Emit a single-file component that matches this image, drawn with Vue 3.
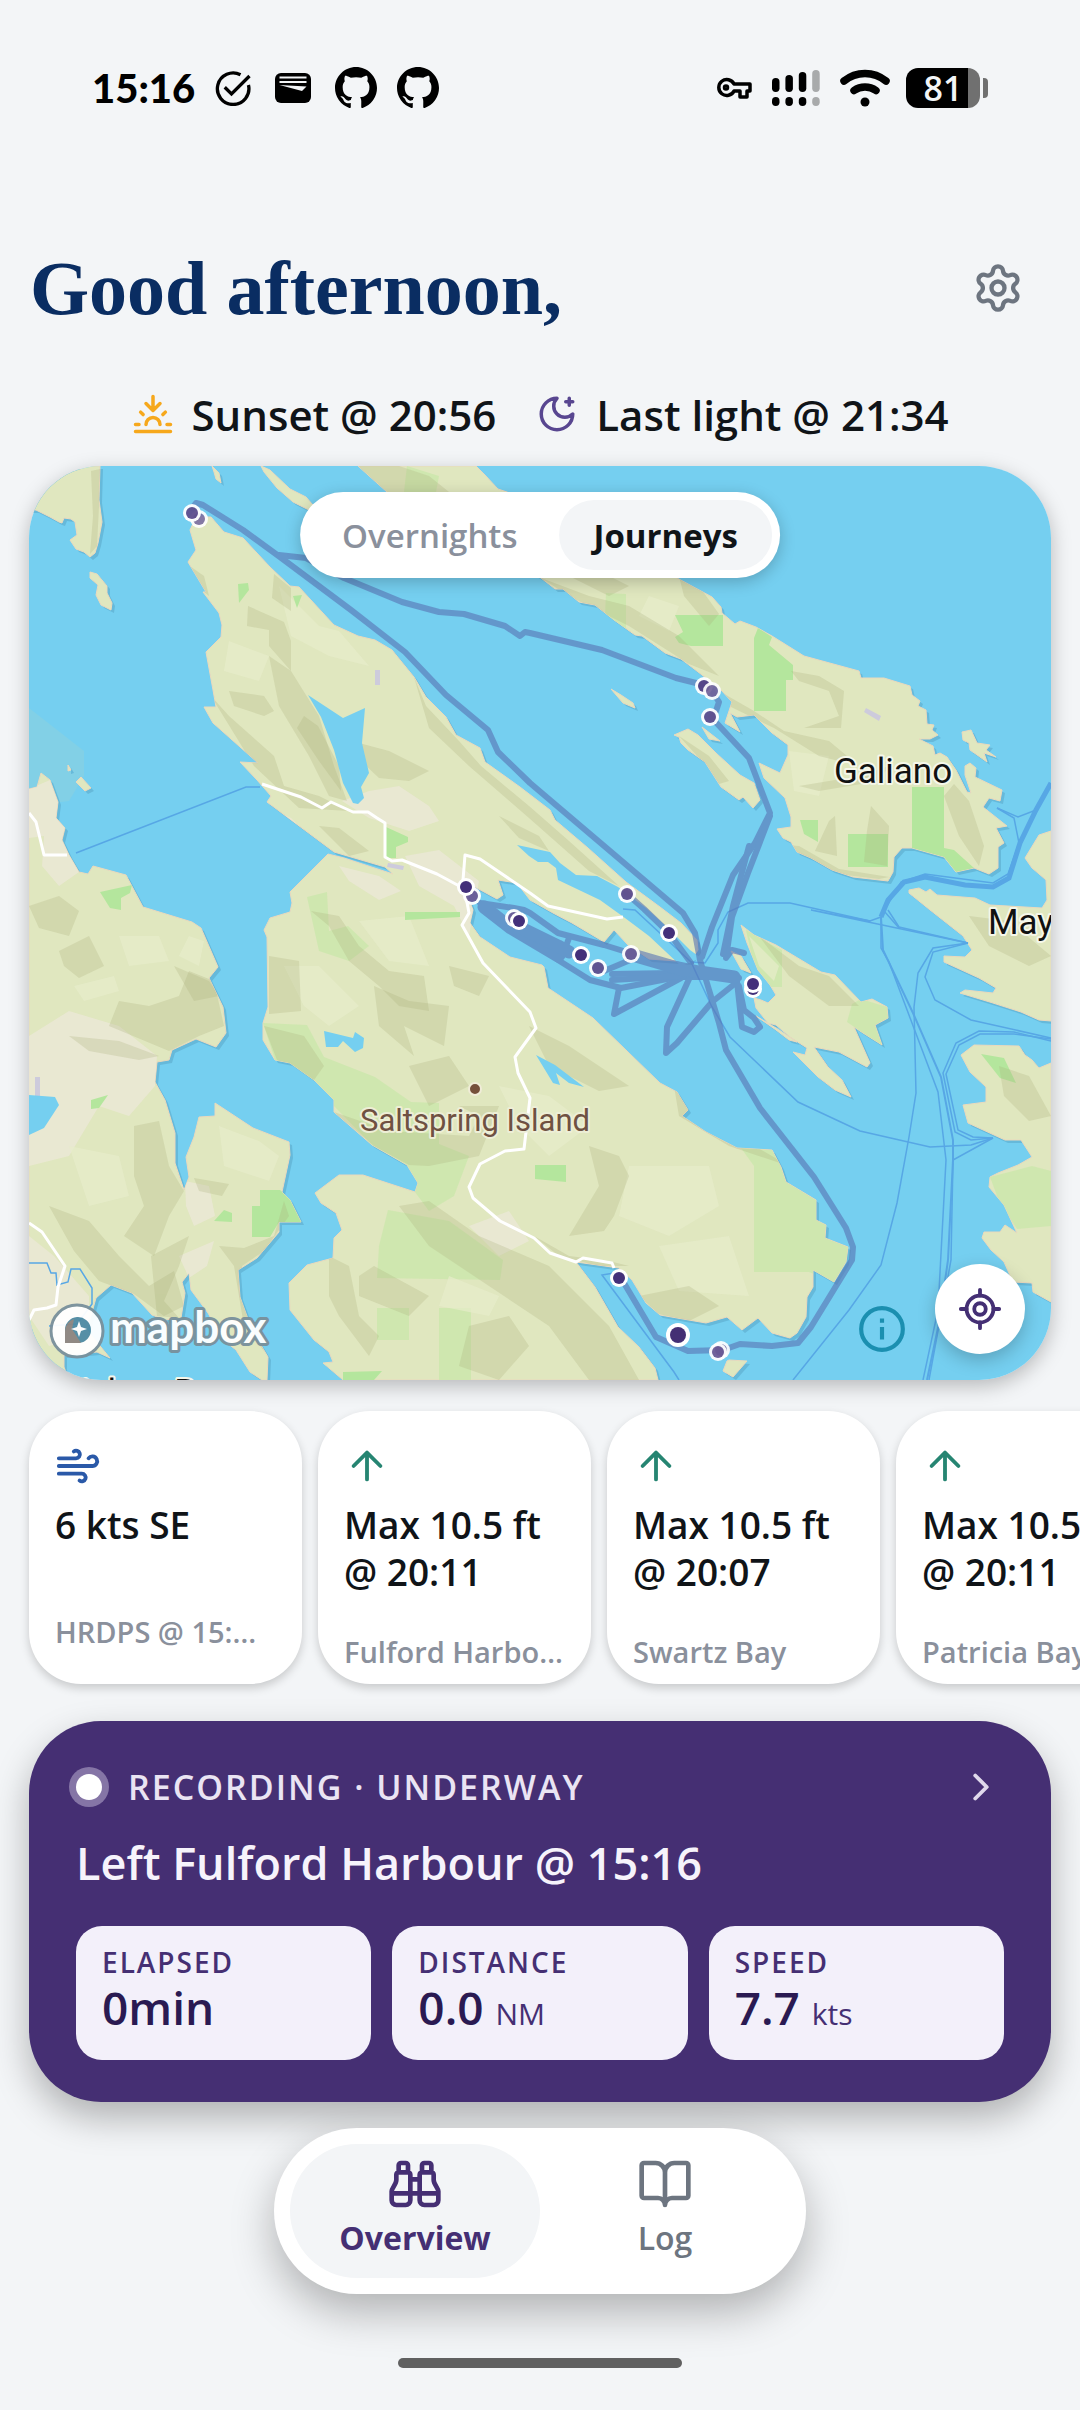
<script setup>
import { ref } from "vue";

const mapMode = ref("Journeys");
const mapModes = ["Overnights", "Journeys"];

const conditions = [
  { kind: "wind", value: "6 kts SE", source: "HRDPS @ 15:00" },
  { kind: "tide", value: "Max 10.5 ft @ 20:11", source: "Fulford Harbour" },
  { kind: "tide", value: "Max 10.5 ft @ 20:07", source: "Swartz Bay" },
  { kind: "tide", value: "Max 10.5 ft @ 20:11", source: "Patricia Bay" },
];

const stats = [
  { label: "Elapsed", value: "0min", unit: "" },
  { label: "Distance", value: "0.0", unit: "NM" },
  { label: "Speed", value: "7.7", unit: "kts" },
];

const signal = [14, 17, 20, 22];

// coastlines
const lands = [
  "0,0 71,0 70,34 73,56 69,77 66,87 61,91 55,86 47,83 41,74 48,69 46,56 42,53 35,52 33,57 30,56 21,51 7,44 0,44",
  "61,106 68,108 78,120 78,127 83,137 82,144 72,139 67,129 69,119 61,112",
  "183,0 190,7 192,17 187,13 185,6",
  "232,0 241,4 261,23 277,31 290,46 280,44 264,36 248,22 235,6",
  "329,0 447,0 456,9 469,23 478,26 648,112 683,131 692,141 693,147 706,158 711,155 727,161 743,170 775,190 830,205 832,212 855,212 881,220 883,229 891,235 889,240 897,244 898,258 905,259 903,264 909,269 901,273 890,273 904,280 906,289 911,287 918,291 927,304 938,326 942,327 936,309 936,300 941,297 947,302 946,311 973,324 971,335 960,332 954,341 978,360 967,362 975,377 969,381 969,402 960,408 945,402 927,406 915,391 883,382 873,382 865,391 864,406 859,415 824,411 803,404 782,392 768,386 762,376 754,372 748,363 762,361 762,351 756,332 735,312 730,297 751,307 759,289 759,279 743,267 725,249 708,251 701,247 711,266 696,257 703,236 692,224 673,209 652,193 636,187 613,170 606,169 585,154 566,139 550,136 534,123 526,123 512,112 358,26",
  "582,223 592,229 604,237 606,242 594,237",
  "645,269 659,263 669,269 687,287 711,309 725,317 731,334 724,342 714,331 710,334 692,321 676,296 659,284 652,277 650,271",
  "673,261 691,275 680,273",
  "933,266 942,264 948,277 961,279 957,284 967,291 955,287 958,296 941,284 940,277 934,274",
  "1022,365 1010,369 996,392 1003,402 1017,414 1018,434 1013,442 961,439 946,432 908,429 901,423 897,426 890,422 880,424 880,427 901,444 934,470 943,484 936,491 915,490 915,496 950,512 967,522 964,527 936,524 931,527 964,537 992,546 1010,554 1022,555",
  "945,579 990,580 996,589 1003,594 1010,602 1022,597 1022,836 1004,826 1003,817 984,816 975,796 962,784 953,772 955,766 971,766 976,759 988,767 975,739 960,721 961,711 969,707 989,699 1003,691 992,674 976,674 939,657 934,639 957,636 957,621 941,606 932,589",
  "712,459 725,469 747,479 792,506 806,509 832,536 843,533 858,541 859,552 846,559 853,579 834,567 825,561 841,597 838,601 810,586 785,581 799,601 813,614 822,631 806,624 789,611 764,586 776,589 778,582 761,571 747,559 739,557 727,542 725,532 732,534 739,537 747,529 741,519 729,504 718,477",
  "727,550 747,562 768,576 760,574 747,564",
  "702,485 712,490 722,507 712,503",
  "182,51 195,66 214,72 241,101 261,120 270,121 305,159 329,170 346,174 363,184 385,211 397,231 417,251 427,269 451,282 456,296 491,321 521,344 526,354 559,382 597,416 631,441 652,457 668,474 669,484 661,496 620,493 599,479 585,464 575,476 543,457 524,447 501,434 488,417 469,414 474,429 468,433 446,421 437,426 444,444 441,457 451,471 481,491 513,499 515,501 519,522 564,552 631,617 648,626 659,644 653,650 677,666 708,682 743,684 752,701 757,716 787,734 787,754 797,759 796,772 819,781 817,796 805,816 784,804 784,821 778,831 777,851 768,867 761,872 743,867 729,852 713,864 698,851 677,857 631,849 617,837 603,814 590,802 547,796 566,821 589,861 610,881 626,902 629,914 314,914 294,897 304,896 300,886 285,874 261,844 260,817 278,799 304,792 305,772 313,764 307,747 292,737 286,727 310,709 334,709 386,726 389,717 378,699 343,679 305,646 305,634 285,614 261,597 246,594 234,574 234,557 239,541 238,471 235,464 241,452 261,446 263,437 261,426 299,388 315,392 364,408 356,401 305,386 238,336 242,330 228,314 211,296 229,297 184,257 175,241 187,241 184,224 177,186 192,171 193,159 190,147 174,126 177,126 159,96 167,84 161,64 167,51",
  "0,323 8,321 12,307 21,314 29,336 27,352 36,362 33,374 40,389 50,406 59,408 64,400 97,409 114,441 163,456 172,462 189,501 180,512 194,541 197,567 187,581 167,573 143,584 140,594 128,596 126,616 136,634 146,667 146,697 155,724 160,711 157,691 165,671 170,651 186,650 186,637 224,662 260,676 261,689 253,726 261,734 272,756 250,756 250,766 228,792 209,804 211,831 223,864 239,891 238,914 233,914 221,906 207,884 194,874 179,847 162,824 160,807 153,816 156,827 152,852 136,854 123,849 103,827 82,819 67,832 58,864 81,892 68,886 35,889 35,901 40,914 0,914",
  "39,299 42,304 39,305",
  "47,316 52,311 62,322 56,325",
  "698,895 694,905 704,911 718,895 700,894",
];

const lakes = [
  "279,229 314,252 336,242 333,277 340,307 332,321 335,332 329,338 324,337 314,317 305,284 292,251",
  "488,379 521,386 531,397 547,409 568,410 589,421 617,442 641,464 661,484 672,492 652,500 620,470 596,452 571,434 550,424 529,414 527,402 519,396 509,396 500,390",
  "0,629 26,631 30,639 15,662 0,669",
  "295,565 324,572 326,566 335,572 334,582 326,586 314,575 309,581 297,581",
  "507,589 526,599 555,621 540,617 527,607 531,619 524,617",
];

const parks = [
  "357,361 379,371 379,376 367,381 367,392 357,392",
  "376,446 431,446 431,451 376,454",
  "71,426 103,419 101,427 92,432 92,444 81,442",
  "646,149 694,149 694,180 662,180 650,177 646,171 654,166",
  "729,162 743,171 740,179 764,199 764,214 757,214 757,245 725,245 725,172",
  "883,321 915,321 915,382 925,384 945,402 927,406 915,391 883,382",
  "819,368 859,368 859,401 819,401",
  "771,354 789,354 789,376 775,368",
  "506,699 537,699 537,716 506,713",
  "231,724 251,724 270,741 272,757 250,756 241,771 223,771 223,740 231,740",
  "185,755 195,744 203,747 203,756",
  "314,906 353,905 345,914 314,914",
  "952,588 975,592 987,617 971,612",
  "62,634 79,629 70,642 62,643",
  "209,118 219,117 220,124 210,137",
  "264,130 273,129 268,142",
];

const woods = [
  "712,682 743,684 752,701 757,716 787,734 787,754 797,759 796,772 819,781 817,796 805,816 780,806 725,806 725,700",
  "717,464 745,480 753,484 753,521 738,521 725,500",
  "348,842 380,842 380,874 348,874",
  "410,842 442,842 442,914 410,914",
  "359,744 420,755 474,794 471,814 348,812 350,780",
  "234,557 278,559 295,591 346,611 382,636 410,637 410,678 440,690 425,730 400,745 386,726 378,699 343,679 305,640 285,614 246,594",
  "832,533 858,541 859,552 846,559 853,579 834,567 818,556 823,538",
  "961,711 1003,700 1022,705 1022,760 988,763 970,735",
  "278,431 298,426 300,465 319,460 340,480 320,495 290,485",
  "577,127 597,128 597,164 576,150",
  "378,0 410,10 407,26 375,26",
];

// low ground and towns
const lowlands = [
  "0,323 21,314 29,336 36,362 33,374 50,406 30,420 13,400 15,370 0,372",
  "0,570 40,545 90,560 128,590 126,620 100,650 70,640 40,690 0,700",
  "313,335 340,325 370,320 400,340 410,355 380,365 340,352",
  "376,390 410,384 450,415 440,470 425,440 390,420",
  "310,400 350,410 372,425 350,434 320,415",
  "156,715 180,720 186,750 165,760 157,740",
  "440,760 480,745 500,775 470,790",
  "150,790 185,775 178,800 160,812",
  "0,770 25,790 60,830 60,870 20,880 0,850",
  "236,340 262,352 290,380 276,382 238,350",
];

const shades = [
  "219,140 255,156 262,175 262,205 240,180 240,164 218,160",
  "240,190 262,205 290,250 305,300 318,335 300,330 280,290 250,240",
  "182,230 200,250 245,290 255,320 290,330 320,345 270,342 225,300",
  "275,250 289,260 310,300 312,325 290,295 268,262",
  "330,277 360,285 400,305 380,315 350,312 332,295",
  "155,96 175,110 180,130 168,120",
  "245,108 262,122 262,145 243,132",
  "385,211 397,240 430,275 452,300 500,340 540,375 590,420 560,405 500,352 440,300 400,262",
  "200,225 235,230 245,245 235,250 205,240",
  "290,360 310,362 340,385 320,390",
  "470,350 510,370 520,385 490,372",
  "329,0 358,26 420,26 400,10 370,0",
  "420,26 500,60 560,100 600,120 580,130 540,110 480,60",
  "512,112 560,130 600,140 650,170 690,210 660,198 600,160 540,130",
  "655,195 690,225 725,245 755,265 800,275 830,300 790,290 745,262 700,240",
  "762,205 790,210 815,225 812,262 775,262 810,250 800,225 770,215",
  "770,320 830,310 860,300 850,315 790,325",
  "800,355 806,350 808,390 786,385",
  "842,340 860,360 858,400 835,396 838,365",
  "925,318 940,335 955,380 950,400 930,370 915,330",
  "650,110 670,120 690,148 680,160 655,130",
  "740,378 770,380 810,403 860,411 850,413 800,407 770,392",
  "30,485 60,470 75,500 50,512 35,500",
  "90,535 120,540 150,530 160,505 185,515 195,560 170,570 140,585 80,560",
  "40,570 90,575 130,590 110,594 60,585",
  "145,500 180,515 190,530 165,535",
  "20,740 60,755 90,790 120,820 145,805 155,840 135,850 105,828 70,815 45,785",
  "105,660 130,655 140,700 155,725 140,750 125,790 95,770 115,740 105,710",
  "122,790 160,770 150,800 135,835 150,852 128,850",
  "165,712 200,718 193,730 170,725",
  "213,800 235,785 260,750 255,735 245,770 215,782 190,780 205,800 215,860 235,885 225,850 212,830",
  "282,445 300,460 320,495 350,520 370,540 400,545 395,510 360,505 330,480 310,450",
  "240,490 270,495 272,545 240,548",
  "345,520 380,535 420,540 415,580 375,560 385,590 350,560",
  "235,560 275,570 295,600 285,614 248,594",
  "305,646 360,665 440,670 450,650 430,640 470,640 450,690 400,700 380,699 345,680",
  "420,500 460,510 450,530 425,520",
  "380,600 420,590 440,620 400,640",
  "330,810 345,800 400,830 380,850 330,830",
  "370,740 400,735 450,770 520,800 580,860 610,914 560,914 520,860 460,820 400,780",
  "440,860 480,850 500,880 470,914 430,900",
  "300,790 320,800 330,850 350,870 340,890 310,850 300,830",
  "500,560 540,580 600,620 570,625 520,600",
  "560,680 590,690 600,710 585,750 575,765 540,770 570,720",
  "505,770 540,790 580,795 600,800 570,800 530,790",
  "610,830 660,820 690,840 660,855 630,848",
  "645,620 700,665 760,700 700,680 650,650",
  "730,470 770,500 800,510 830,540 800,540 760,510",
  "650,270 680,290 700,315 690,318 670,292",
  "940,450 980,455 1022,490 1000,500 960,480",
  "970,600 1000,610 1022,650 1000,655 975,630",
  "0,440 30,430 50,445 40,470 10,462",
  "62,5 71,3 70,40 68,80 61,88 64,50",
];

const hills = [
  "250,120 290,160 310,165 340,200 300,190 262,170",
  "200,175 240,190 230,215 195,205",
  "620,130 650,140 640,165 610,150",
  "760,285 800,290 790,330 765,325",
  "330,455 380,450 400,500 360,495",
  "255,500 290,500 330,540 300,560 275,540",
  "160,470 175,475 170,500 150,490",
  "90,470 130,470 140,495 100,500",
  "45,520 85,510 90,525 55,535",
  "190,660 230,675 250,690 240,715 195,700",
  "40,680 90,690 100,730 60,740",
  "470,620 520,630 560,660 520,690 490,660",
  "600,700 680,700 690,740 640,770 590,750",
  "630,780 700,770 720,830 650,825",
  "420,810 470,830 460,850 410,840",
  "720,470 750,500 745,515 730,500",
];

const roads = [
  "233,318 272,331 293,342 302,336 324,346 339,346 348,352 356,357 356,391 363,395 373,394 408,408 434,422",
  "434,414 436,389 451,393 501,427 519,440 578,453 594,451",
  "437,431 440,447 433,459 454,497 501,546 507,562 486,591 489,607 501,632 495,683 476,685 451,698 440,721 444,732 471,755 505,772 521,787 547,796 554,792 583,797 585,802",
  "0,347 7,356 15,389 38,389",
  "0,757 13,766 36,800 29,821 27,839 18,842 5,844 0,854",
];

const ferries = [
  "47,387 217,321 231,321",
  "852,451 852,482 860,496 909,626 917,694 909,844 894,914",
  "939,477 904,482 889,507 885,541 887,627 880,671 868,737 852,799 820,844 764,914",
  "939,477 904,486 896,511 906,534 942,554 1022,572",
  "1022,575 985,566 950,565 927,577 914,607 926,666 942,674 964,672",
  "1022,573 985,568 951,568 930,579 917,608 929,664 944,671 964,672",
  "964,672 942,679 901,681 831,665 769,636 701,571 683,541 662,496 606,444 594,443",
  "968,342 989,351 1007,344",
  "939,477 870,461 859,444",
  "939,477 782,444 841,455 852,451",
  "841,455 761,437 719,437 699,446 689,464 689,477 676,497 662,496",
  "964,672 924,694 922,794 900,914",
  "585,807 573,809 645,906 650,914",
  "968,342 985,352 990,377 979,408 964,417 896,408 872,416 855,445 870,462",
  "0,797 18,797 22,807 27,807 28,819 39,816 42,803 51,803 63,822 63,838 48,858 20,860",
];

const journeys = [
  "163,42 167,37 174,39 214,64 251,91 322,144 376,186 417,229 459,264 469,286 501,317 654,447 666,467 671,494 690,557 697,584 731,642 785,711 817,762 824,781 823,794 782,861 769,877 743,880 711,878 694,884 659,885 627,871 592,812",
  "250,89 277,92 315,112 373,136 410,146 435,148 476,160 491,170 496,166 501,167 573,184 647,212 675,219 683,225 690,236 687,245 682,251 720,292 741,347 726,377 704,409 683,461 673,491",
  "741,350 719,407 703,451 697,492 703,484 715,487",
  "720,380 704,440 694,488",
  "451,437 485,442 495,444 501,447 529,467 575,479 617,492 659,504 708,511",
  "529,494 561,514 592,522 648,511 708,511",
  "540,472 533,491",
  "575,505 606,492",
  "590,522 585,548 652,512",
  "661,511 638,561 637,587 648,577 683,536 708,516",
  "708,516 713,561 725,566 731,561 725,552 715,544 710,520",
  "597,427 615,443 640,467 662,497",
  "583,508 645,507 710,512",
  "583,514 650,510",
];

const busyLegs = [
  "455,441 482,462 529,490",
  "488,460 529,480 540,486",
  "640,500 670,506 705,511",
  "600,488 655,504",
];

const stops = [
  [170, 53, 0.7], [163, 47, 0.85], [675, 220, 0.9], [683, 225, 0.75], [681, 251, 0.85],
  [598, 428, 0.85], [640, 467, 1], [602, 488, 0.8], [552, 489, 1], [569, 502, 0.85],
  [724, 523, 1], [724, 518, 1], [443, 430, 0.8], [437, 421, 1],
  [485, 452, 0.8], [490, 455, 1], [590, 812, 1], [692, 884, 0.7], [689, 886, 0.8],
];
</script>

<template>
  <div class="screen">
    <div class="status">
      <div class="status-side">
        <span class="clock">15:16</span>
        <svg class="status-icon" viewBox="0 0 24 24" fill="none" stroke="#000" stroke-width="2.2">
          <path d="M17 3.2A10.5 10.5 0 1 0 22.3 10" />
          <path d="M6.5 11.5l4.5 4.5L23 4" />
        </svg>
        <svg class="status-icon" viewBox="0 0 24 24">
          <rect y="2" width="24" height="20" rx="4" />
          <path d="M3 5h18M3 8h18" stroke="#f3f5f7" stroke-width="1.2" />
          <path d="M3 10l15 4 3-3z" fill="#f3f5f7" />
        </svg>
        <svg v-for="n in 2" :key="n" class="status-logo" viewBox="0 0 16 16">
          <path d="M8 0c4.42 0 8 3.58 8 8a8.013 8.013 0 0 1-5.45 7.59c-.4.08-.55-.17-.55-.38 0-.27.01-1.13.01-2.2 0-.75-.25-1.23-.54-1.48 1.78-.2 3.65-.88 3.65-3.95 0-.88-.31-1.59-.82-2.15.08-.2.36-1.02-.08-2.12 0 0-.67-.22-2.2.82-.64-.18-1.32-.27-2-.27-.68 0-1.36.09-2 .27-1.53-1.03-2.2-.82-2.2-.82-.44 1.1-.16 1.92-.08 2.12-.51.56-.82 1.28-.82 2.15 0 3.06 1.86 3.75 3.64 3.95-.23.2-.44.55-.51 1.07-.46.21-1.61.55-2.33-.66-.15-.24-.6-.83-1.23-.82-.67.01-.27.38.01.53.34.19.73.9.82 1.13.16.45.68 1.31 2.69.94 0 .67.01 1.3.01 1.49 0 .21-.15.45-.55.38A7.995 7.995 0 0 1 0 8c0-4.42 3.58-8 8-8Z" />
        </svg>
      </div>
      <div class="status-side right">
        <svg class="status-icon" viewBox="0 0 36 22" fill="none" stroke="#000" stroke-width="3.5">
          <path d="M18 7h16v7h-3v6h-7v-6h-6a8 8 0 1 1 0-7z" stroke-linejoin="round" />
          <circle cx="10" cy="10.5" r="1.5" />
        </svg>
        <svg class="signal" viewBox="0 0 48 36">
          <g v-for="(h, i) in signal" :key="i" :opacity="i === 3 ? 0.3 : 1">
            <rect :x="i * 13.4" :y="22 - h" width="7.5" :height="h" rx="3.7" />
            <rect :x="i * 13.4" y="27" width="7.5" height="9" rx="3.7" />
          </g>
        </svg>
        <svg class="wifi" viewBox="0 0 50 38" fill="none" stroke="#000" stroke-width="7.5" stroke-linecap="round">
          <path d="M4 12a33 33 0 0 1 42 0" />
          <path d="M14 21.5a19 19 0 0 1 22 0" />
          <circle cx="25" cy="33" r="4.5" fill="#000" stroke="none" />
        </svg>
        <div class="battery">
          <span class="battery-body">81</span>
          <span class="battery-nub"></span>
        </div>
      </div>
    </div>

    <header class="header">
      <h1>Good afternoon,</h1>
      <button class="settings" aria-label="Settings">
        <svg viewBox="0 0 24 24">
          <path d="M9.671 4.136a2.34 2.34 0 0 1 4.659 0 2.34 2.34 0 0 0 3.319 1.915 2.34 2.34 0 0 1 2.33 4.033 2.34 2.34 0 0 0 0 3.831 2.34 2.34 0 0 1-2.33 4.033 2.34 2.34 0 0 0-3.319 1.915 2.34 2.34 0 0 1-4.659 0 2.34 2.34 0 0 0-3.32-1.915 2.34 2.34 0 0 1-2.33-4.033 2.34 2.34 0 0 0 0-3.831A2.34 2.34 0 0 1 6.35 6.051a2.34 2.34 0 0 0 3.319-1.915" />
          <circle cx="12" cy="12" r="3" />
        </svg>
      </button>
    </header>

    <div class="sun">
      <div class="sun-item">
        <svg class="sunset" viewBox="0 0 24 24">
          <path d="M12 10V2M4.93 10.93l1.41 1.41M2 18h2M20 18h2M19.07 10.93l-1.41 1.41M22 22H2M16 6l-4 4-4-4M16 18a4 4 0 0 0-8 0" />
        </svg>
        <span>Sunset @ 20:56</span>
      </div>
      <div class="sun-item">
        <svg class="moon" viewBox="0 0 24 24">
          <path d="M12 3a6 6 0 0 0 9 9 9 9 0 1 1-9-9ZM19 3v4M21 5h-4" />
        </svg>
        <span>Last light @ 21:34</span>
      </div>
    </div>

    <section class="map">
      <svg class="map-canvas" viewBox="0 0 1022 914" preserveAspectRatio="xMidYMid slice">
        <defs>
          <clipPath id="land">
            <polygon v-for="(p, i) in lands" :key="i" :points="p" />
          </clipPath>
        </defs>
        <rect width="1022" height="914" fill="#75cff0" />
        <polygon points="0,242 55,285 55,310 40,335 0,340" fill="#82d0e6" />
        <g fill="#66b9da" transform="translate(3 3)">
          <polygon v-for="(p, i) in lands" :key="i" :points="p" />
        </g>
        <g fill="#e0e7bf" stroke="#ead9bd" stroke-width="1">
          <polygon v-for="(p, i) in lands" :key="i" :points="p" />
        </g>
        <g clip-path="url(#land)">
          <polygon v-for="(p, i) in lowlands" :key="i" :points="p" fill="#eee8dc" opacity="0.65" />
          <polygon v-for="(p, i) in woods" :key="i" :points="p" fill="#cae7ab" opacity="0.8" />
          <polygon v-for="(p, i) in hills" :key="i" :points="p" fill="#e7ecca" opacity="0.7" />
          <polygon v-for="(p, i) in parks" :key="i" :points="p" fill="#b4e69d" />
          <polygon v-for="(p, i) in shades" :key="i" :points="p" fill="#a9ad78" opacity="0.25" />
          <g fill="#cdcbdc">
            <rect x="346" y="204" width="5" height="15" />
            <rect x="6" y="611" width="5" height="20" />
            <polygon points="359,397 375,400 374,404 358,401" />
            <polygon points="837,242 852,250 850,255 835,246" />
          </g>
        </g>
        <polygon v-for="(p, i) in lakes" :key="i" :points="p" fill="#75cff0" />
        <g fill="none" stroke="#57a7e5" stroke-width="1.5">
          <polyline v-for="(p, i) in ferries" :key="i" :points="p" />
          <polyline points="1022,317 1007,344 991,377 980,412 964,421 936,419 896,411 875,416 859,434 852,451" stroke-width="5" />
          <polyline points="852,451 854,484 884,547 912,611 924,674 924,694 919,794 910,857 898,914" stroke-width="2" />
        </g>
        <g fill="none" stroke="#fff" stroke-width="3" stroke-linejoin="round">
          <polyline v-for="(p, i) in roads" :key="i" :points="p" />
        </g>
        <g fill="none" stroke="#5873b4" stroke-width="6" stroke-linejoin="round" stroke-linecap="round" opacity="0.6">
          <polyline v-for="(p, i) in journeys" :key="i" :points="p" />
          <polyline v-for="(p, i) in busyLegs" :key="i" :points="p" stroke-width="13" />
        </g>
        <g v-for="([x, y, o], i) in stops" :key="i" :opacity="0.7 + o * 0.3">
          <circle :cx="x" :cy="y" r="9" fill="#fff" />
          <circle :cx="x" :cy="y" r="6" fill="#43307a" :opacity="o" />
        </g>
        <circle cx="649" cy="869" r="12" fill="#fff" />
        <circle cx="649" cy="869" r="8" fill="#442f74" />
        <circle cx="446" cy="623" r="6" fill="#75503a" stroke="#f0ecd8" stroke-width="2" />
        <g class="map-labels">
          <text x="446" y="665" class="label-island">Saltspring Island</text>
          <text x="864" y="317">Galiano</text>
          <text x="959" y="468" class="label-start">Mayne</text>
          <text x="-17" y="938" class="label-start">Cowichan Bay</text>
        </g>
        <g opacity="0.95">
          <circle cx="48" cy="865" r="26" fill="#fff" stroke="#79909b" stroke-width="3" />
          <path d="M36 877v-12a13 13 0 1 1 14 12z" fill="#4f8ba4" />
          <path d="M36 877v-12a13 13 0 0 1 9-12l-2 10 9 14z" fill="#8c8480" />
          <path d="M50 855l2 6 6 2-6 2-2 6-2-6-6-2 6-2z" fill="#fff" />
          <text x="81" y="877" class="map-logo">mapbox</text>
        </g>
      </svg>

      <div class="mode-switch">
        <button v-for="mode in mapModes" :key="mode" :class="{ active: mode === mapMode }" @click="mapMode = mode">
          {{ mode }}
        </button>
      </div>

      <div class="map-tools">
        <button class="info" aria-label="Map information">
          <svg viewBox="0 0 24 24">
            <circle cx="12" cy="12" r="10" />
            <path d="M12 11v6M12 7v2" />
          </svg>
        </button>
        <button class="locate" aria-label="Centre on my position">
          <svg viewBox="0 0 24 24">
            <path d="M2 12h3M19 12h3M12 2v3M12 19v3" />
            <circle cx="12" cy="12" r="7" />
            <circle cx="12" cy="12" r="3" />
          </svg>
        </button>
      </div>
    </section>

    <div class="conditions">
      <article v-for="(item, i) in conditions" :key="i" :class="['card', item.kind]">
        <svg v-if="item.kind === 'wind'" viewBox="0 0 24 24">
          <path d="M12.8 19.6A2 2 0 1 0 14 16H2M17.5 8a2.5 2.5 0 1 1 2 4H2M9.8 4.4A2 2 0 1 1 11 8H2" />
        </svg>
        <svg v-else viewBox="0 0 24 24">
          <path d="M5 12l7-7 7 7M12 19V5" />
        </svg>
        <p class="card-value">{{ item.value }}</p>
        <p class="card-source">{{ item.source }}</p>
      </article>
    </div>

    <section class="recording">
      <a class="recording-head" href="#recording">
        <span class="dot"></span>
        <span class="recording-state">Recording · Underway</span>
        <svg viewBox="0 0 24 24"><path d="M9 18l6-6-6-6" /></svg>
      </a>
      <h2>Left Fulford Harbour @ 15:16</h2>
      <dl class="stats">
        <div v-for="stat in stats" :key="stat.label" class="stat">
          <dt>{{ stat.label }}</dt>
          <dd>{{ stat.value }} <small v-if="stat.unit">{{ stat.unit }}</small></dd>
        </div>
      </dl>
    </section>

    <nav class="tabs">
      <a class="tab active" href="#overview">
        <svg viewBox="0 0 24 24">
          <path d="M10 10h4M19 7V4a1 1 0 0 0-1-1h-2a1 1 0 0 0-1 1v3M20 21a2 2 0 0 0 2-2v-3.851c0-1.39-2-2.962-2-4.829V8a1 1 0 0 0-1-1h-4a1 1 0 0 0-1 1v11a2 2 0 0 0 2 2zM22 16H2M4 21a2 2 0 0 1-2-2v-3.851c0-1.39 2-2.962 2-4.829V8a1 1 0 0 1 1-1h4a1 1 0 0 1 1 1v11a2 2 0 0 1-2 2zM9 7V4a1 1 0 0 0-1-1H6a1 1 0 0 0-1 1v3" />
        </svg>
        Overview
      </a>
      <a class="tab" href="#log">
        <svg viewBox="0 0 24 24">
          <path d="M12 7v14M3 18a1 1 0 0 1-1-1V4a1 1 0 0 1 1-1h5a4 4 0 0 1 4 4 4 4 0 0 1 4-4h5a1 1 0 0 1 1 1v13a1 1 0 0 1-1 1h-6a3 3 0 0 0-3 3 3 3 0 0 0-3-3z" />
        </svg>
        Log
      </a>
    </nav>
    <div class="home-bar"></div>
  </div>
</template>

<style>
body {
  margin: 0;
  background: #f3f5f7;
}
</style>

<style scoped>
* {
  box-sizing: border-box;
}

.screen {
  display: flex;
  flex-direction: column;
  min-height: 100vh;
  overflow: hidden;
  color: #101418;
  background: #f3f5f7;
  font-family: "Open Sans", sans-serif;
}

button {
  padding: 0;
  border: none;
  background: none;
  font-family: inherit;
  cursor: pointer;
}

a {
  color: inherit;
  text-decoration: none;
}

h1,
h2,
p,
dl,
dd {
  margin: 0;
}

svg {
  flex: none;
}

.status {
  display: flex;
  justify-content: space-between;
  align-items: center;
  height: 176px;
  padding: 0 92px;
}

.status-side {
  display: flex;
  align-items: center;
  gap: 20px;
}

.clock {
  color: #000;
  font-family: Lato, sans-serif;
  font-size: 40px;
  font-weight: 900;
}

.status-icon {
  width: 36px;
  height: 36px;
  margin-right: 4px;
}

.status-logo {
  width: 42px;
  height: 42px;
}

.status-side.right {
  gap: 16px;
}

.signal {
  width: 48px;
  height: 36px;
}

.wifi {
  width: 50px;
  height: 38px;
  margin-left: 4px;
}

.battery {
  display: flex;
  align-items: center;
  gap: 3px;
}

.battery-body {
  width: 74px;
  height: 40px;
  border-radius: 12px;
  color: #f3f5f7;
  background: linear-gradient(90deg, #000 84%, #707070 84%);
  font-size: 34px;
  font-weight: 600;
  line-height: 40px;
  text-align: center;
}

.battery-nub {
  width: 5px;
  height: 20px;
  border-radius: 0 4px 4px 0;
  background: #707070;
}

.header {
  display: flex;
  justify-content: space-between;
  align-items: center;
  height: 176px;
  margin-top: 24px;
  padding: 0 56px 0 30px;
}

h1 {
  color: #0a2d62;
  font-family: "Liberation Serif", serif;
  font-size: 76px;
  font-weight: 700;
}

.settings {
  display: flex;
}

.settings svg,
.sun svg,
.map-tools svg,
.card svg,
.recording svg,
.tab svg {
  fill: none;
  stroke: currentColor;
  stroke-width: 2;
  stroke-linecap: round;
  stroke-linejoin: round;
}

.settings svg {
  width: 52px;
  height: 52px;
  color: #6d7580;
}

.sun {
  display: flex;
  justify-content: center;
  gap: 40px;
  height: 90px;
  font-size: 42px;
  font-weight: 600;
}

.sun-item {
  display: flex;
  align-items: center;
  gap: 18px;
  height: 76px;
}

.sun svg {
  width: 42px;
  height: 42px;
}

.sunset {
  color: #f6a81c;
}

.moon {
  color: #584690;
}

.map {
  position: relative;
  margin: 0 29px;
  border-radius: 72px;
  overflow: hidden;
  box-shadow: 0 6px 20px rgb(0 0 0 / 25%);
}

.map-canvas {
  display: block;
  width: 100%;
}

.map-labels text {
  fill: #111;
  stroke: #f5f7ea;
  stroke-width: 4px;
  stroke-linejoin: round;
  paint-order: stroke;
  font-family: Roboto, sans-serif;
  font-size: 35px;
  text-anchor: middle;
}

.map-labels .label-start {
  text-anchor: start;
}

.map-labels .label-island {
  fill: #6f5142;
  stroke: #edeed6;
  font-size: 31px;
}

.map-logo {
  fill: #fff;
  stroke: #79909b;
  stroke-width: 6px;
  stroke-linejoin: round;
  paint-order: stroke;
  font-family: Lato, sans-serif;
  font-size: 44px;
  font-weight: 700;
}

.mode-switch {
  position: absolute;
  top: 26px;
  left: 50%;
  display: flex;
  gap: 8px;
  padding: 8px;
  border-radius: 44px;
  background: #fff;
  box-shadow: 0 4px 16px rgb(0 0 0 / 22%);
  transform: translateX(-50%);
}

.mode-switch button {
  height: 70px;
  padding: 0 34px;
  border-radius: 36px;
  color: #8a909c;
  font-size: 33px;
  font-weight: 600;
}

.mode-switch button.active {
  color: #101418;
  background: #f3f5f7;
  font-weight: 700;
}

.map-tools {
  position: absolute;
  right: 26px;
  bottom: 26px;
  display: flex;
  align-items: flex-end;
  gap: 28px;
}

.info {
  display: flex;
  color: #1b8fb0;
}

.info svg {
  width: 50px;
  height: 50px;
  stroke-linecap: butt;
}

.locate {
  display: flex;
  align-items: center;
  justify-content: center;
  width: 90px;
  height: 90px;
  border-radius: 50%;
  color: #442f74;
  background: #fff;
  box-shadow: 0 6px 18px rgb(0 0 0 / 22%);
}

.locate svg {
  width: 46px;
  height: 46px;
}

.conditions {
  display: flex;
  gap: 16px;
  margin-top: 31px;
  padding: 0 29px;
}

.card {
  display: flex;
  flex: none;
  flex-direction: column;
  align-items: flex-start;
  width: 273px;
  height: 273px;
  padding: 32px 22px 12px 26px;
  border-radius: 52px;
  background: #fff;
  box-shadow: 0 4px 10px rgb(0 0 0 / 18%);
}

.card.wind {
  padding-right: 38px;
}

.card svg {
  width: 46px;
  height: 46px;
}

.card.wind svg {
  color: #2a59a8;
}

.card.tide svg {
  color: #268572;
}

.card-value {
  margin-top: 12px;
  font-size: 37px;
  font-weight: 600;
  line-height: 47px;
}

.card-source {
  width: 100%;
  margin-top: auto;
  overflow: hidden;
  color: #8a909c;
  font-size: 29px;
  font-weight: 600;
  line-height: 40px;
  text-overflow: ellipsis;
  white-space: nowrap;
}

.card.wind .card-source {
  margin-bottom: 20px;
}

.recording {
  margin: 37px 29px 0;
  padding: 42px 47px;
  border-radius: 72px;
  color: #f6f3fb;
  background: #452f73;
  box-shadow: 0 16px 36px rgb(0 0 0 / 28%);
}

.recording-head {
  display: flex;
  align-items: center;
  height: 48px;
}

.dot {
  width: 26px;
  height: 26px;
  margin-right: 26px;
  border-radius: 50%;
  background: #fff;
  box-shadow: 0 0 0 7px #8575a6;
}

.recording-state {
  flex: 1;
  color: #eae4f3;
  font-size: 34px;
  font-weight: 600;
  letter-spacing: 2px;
  text-transform: uppercase;
}

.recording svg {
  width: 46px;
  height: 46px;
  color: #e0d9ec;
}

h2 {
  margin-top: 20px;
  font-size: 45px;
  font-weight: 600;
  line-height: 64px;
}

.stats {
  display: grid;
  grid-template-columns: repeat(3, 1fr);
  gap: 21px;
  margin-top: 31px;
}

.stat {
  padding: 16px 26px 28px;
  border-radius: 26px;
  color: #2a1a52;
  background: #f3f0fa;
}

dt {
  color: #452f73;
  font-size: 28px;
  font-weight: 600;
  letter-spacing: 2px;
  line-height: 40px;
  text-transform: uppercase;
}

dd {
  font-size: 46px;
  font-weight: 600;
  line-height: 50px;
}

dd small {
  color: #452f73;
  font-size: 30px;
  font-weight: 400;
  line-height: 1;
}

.tabs {
  display: flex;
  align-self: center;
  margin-top: 26px;
  padding: 16px;
  border-radius: 84px;
  background: #fff;
  box-shadow: 0 18px 44px rgb(0 0 0 / 28%);
}

.tab {
  display: flex;
  flex-direction: column;
  align-items: center;
  width: 250px;
  height: 134px;
  padding-top: 12px;
  border-radius: 67px;
  color: #6d7580;
  font-size: 32px;
  font-weight: 600;
  line-height: 44px;
}

.tab.active {
  color: #452f73;
  background: #f3f5f7;
  font-weight: 700;
}

.tab svg {
  width: 56px;
  height: 56px;
  margin-bottom: 4px;
}

.home-bar {
  align-self: center;
  width: 284px;
  height: 10px;
  margin: 64px 0 42px;
  border-radius: 5px;
  background: #606060;
}
</style>
